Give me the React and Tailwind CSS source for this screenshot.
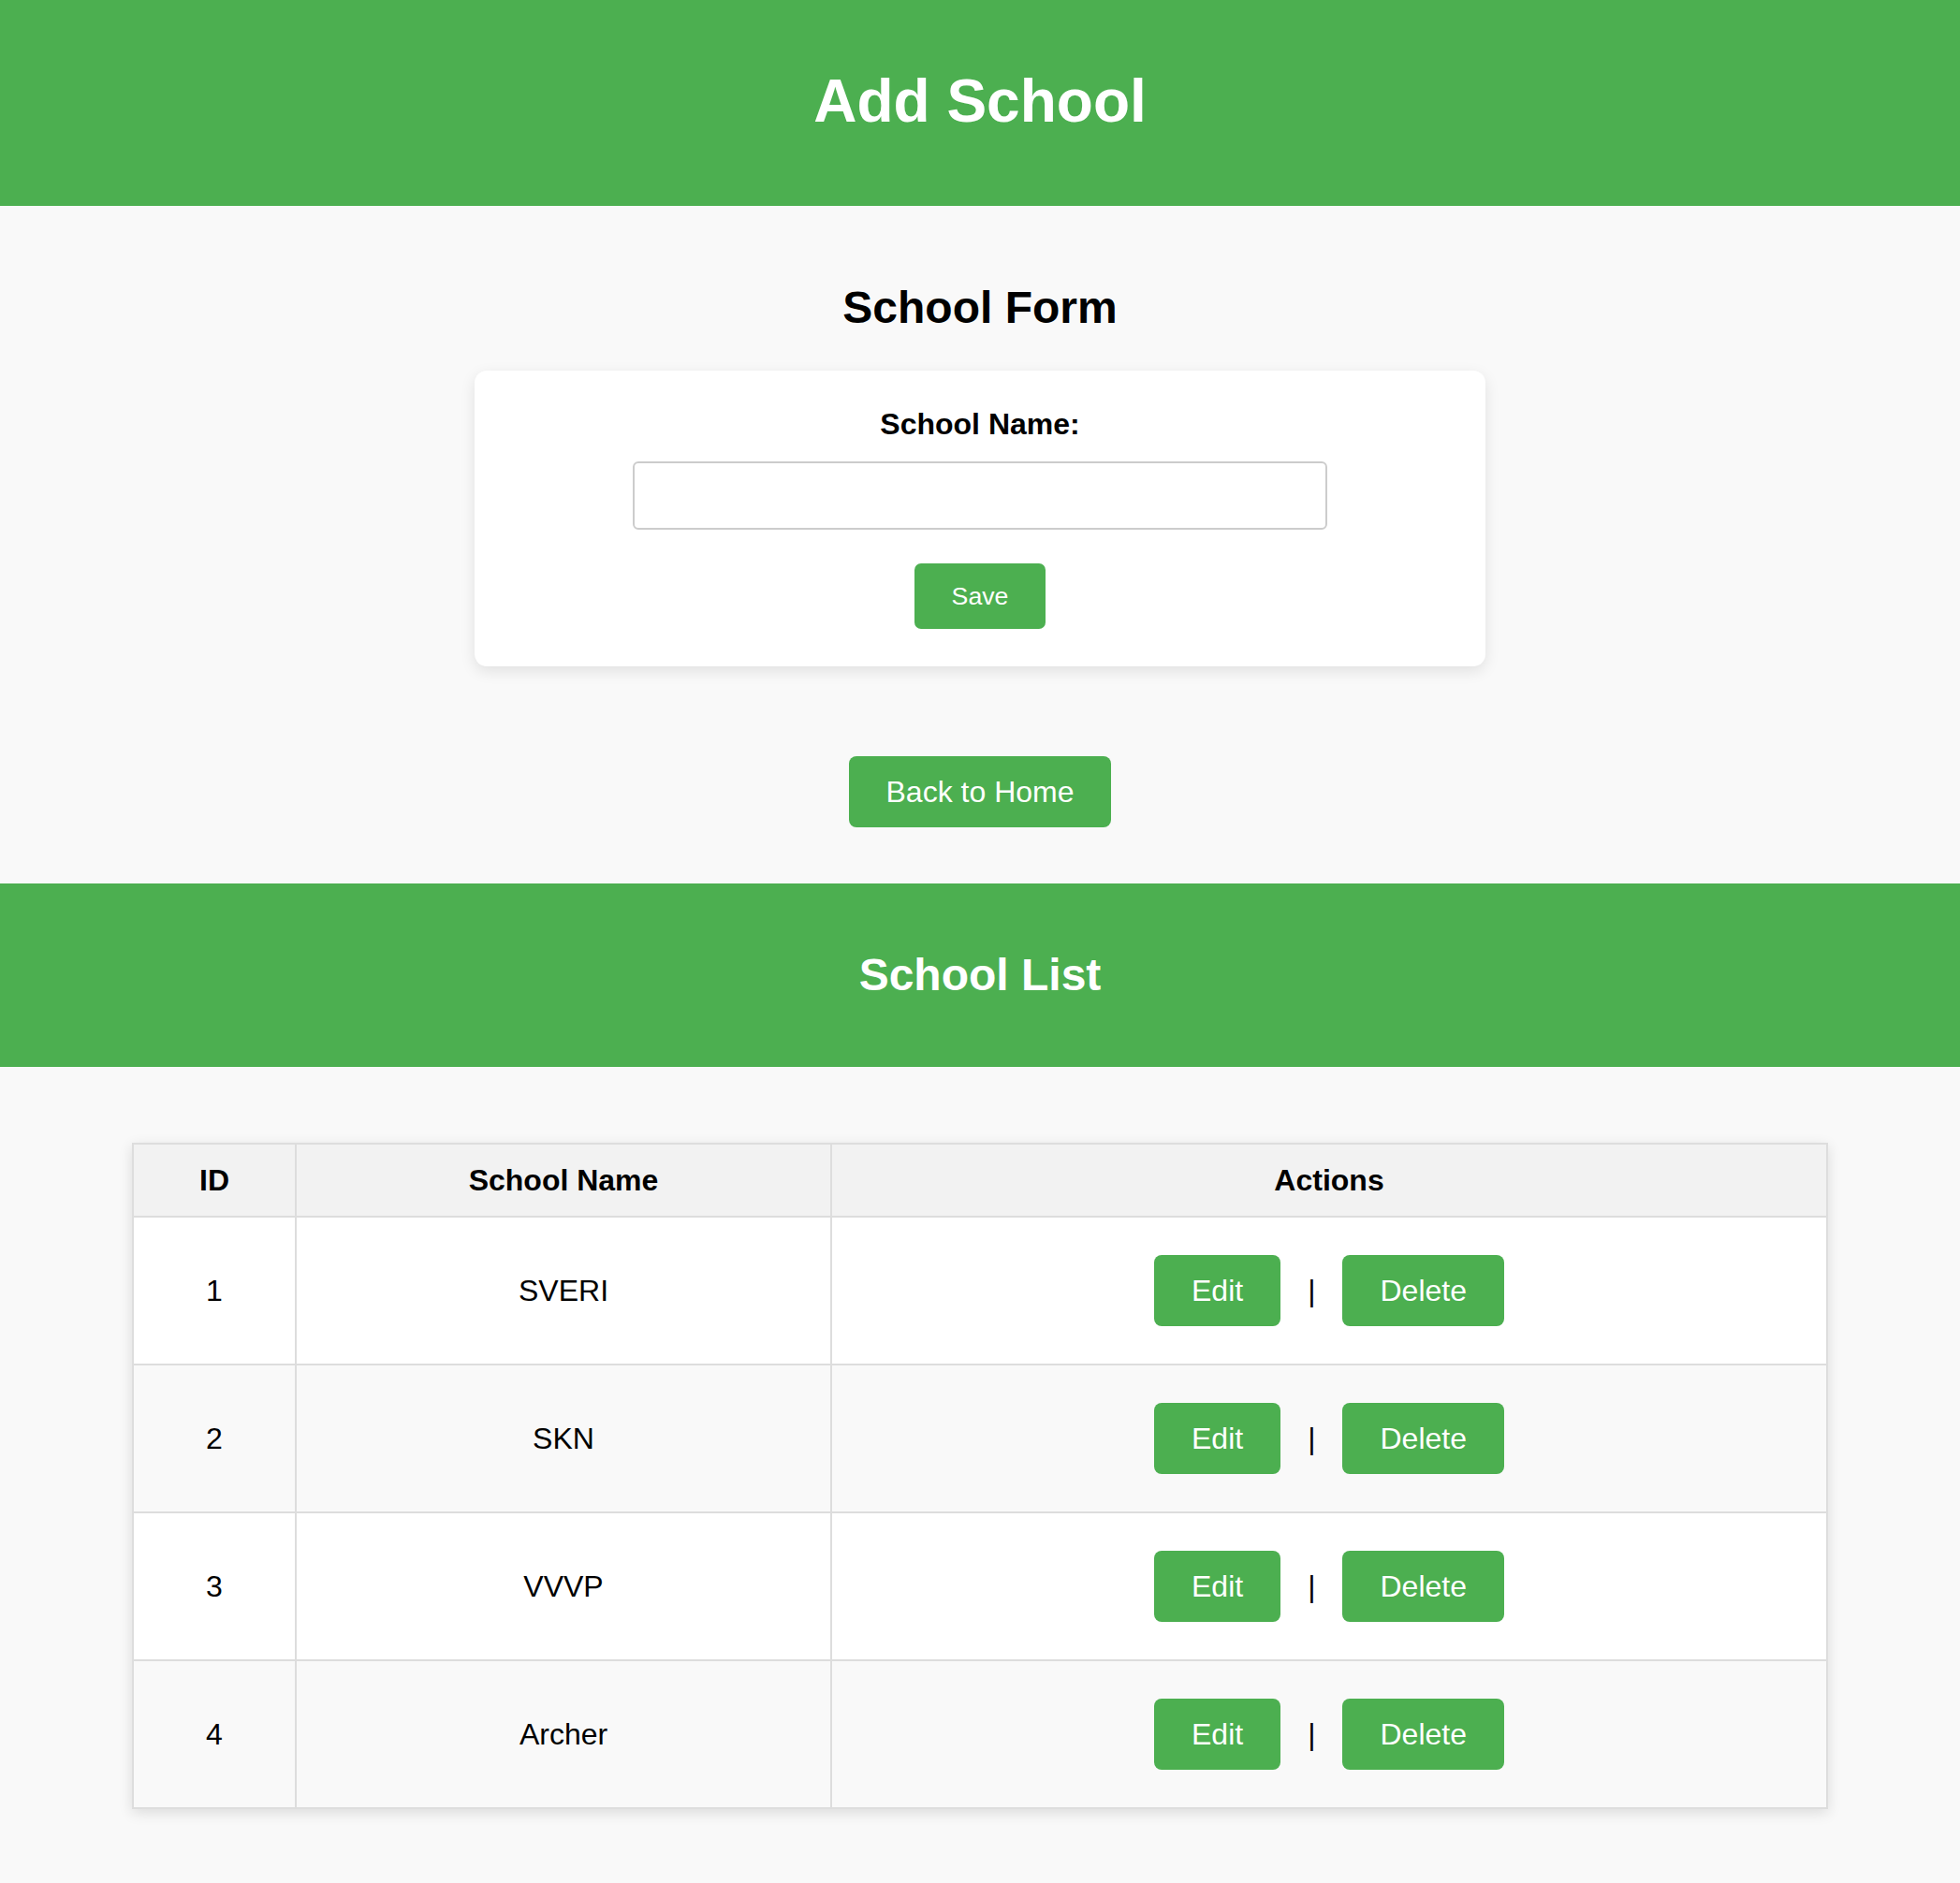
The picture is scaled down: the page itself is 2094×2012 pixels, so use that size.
import React, { useState } from "react";

const schools = [
  { id: 1, name: "SVERI" },
  { id: 2, name: "SKN" },
  { id: 3, name: "VVVP" },
  { id: 4, name: "Archer" },
];

const App = () => {
  const [schoolName, setSchoolName] = useState("");

  const handleSubmit = (e) => {
    e.preventDefault();
  };

  return (
    <div className="min-h-screen bg-[#f9f9f9] pb-[82px] font-['Liberation_Sans',Arial,sans-serif] text-black">
      {/* Page header */}
      <header className="bg-[#4caf50] pt-[71px] pb-[75px] text-center">
        <h1 className="text-[64px] leading-[74px] font-bold text-white">Add School</h1>
      </header>

      {/* Form section */}
      <h2 className="mt-[81px] text-center text-[48px] leading-[55px] font-bold">School Form</h2>

      <form
        onSubmit={handleSubmit}
        className="mx-auto mt-[40px] flex w-[1080px] flex-col items-center rounded-[13px] bg-white pt-[39px] pb-[40px] shadow-[0_5px_16px_rgba(0,0,0,0.1)]"
      >
        <label htmlFor="schoolName" className="text-[32px] leading-[37px] font-bold">
          School Name:
        </label>
        <input
          id="schoolName"
          type="text"
          value={schoolName}
          onChange={(e) => setSchoolName(e.target.value)}
          className="mt-[21px] h-[73px] w-[742px] rounded-[6px] border-2 border-[#cccccc] bg-white px-[13px] text-[26px] outline-none"
        />
        <button
          type="submit"
          className="mt-[36px] rounded-[7px] bg-[#4caf50] px-[40px] py-[20px] text-[26.67px] leading-[30px] text-white"
        >
          Save
        </button>
      </form>

      <div className="mt-[96px] flex justify-center">
        <button className="rounded-[8px] bg-[#4caf50] px-[40px] py-[20px] text-[32px] leading-[36px] text-white">
          Back to Home
        </button>
      </div>

      {/* List section */}
      <div className="mt-[60px] bg-[#4caf50] pt-[70px] pb-[71px] text-center">
        <h2 className="text-[48px] leading-[55px] font-bold text-white">School List</h2>
      </div>

      <table className="mx-auto mt-[81px] w-[1812px] border-collapse border-2 border-[#dddddd] text-center text-[32px] shadow-[0_4px_14px_rgba(0,0,0,0.12)]">
        <thead>
          <tr className="bg-[#f2f2f2]">
            <th className="w-[174px] border-2 border-[#dddddd] py-[20px] leading-[36px] font-bold">ID</th>
            <th className="w-[572px] border-2 border-[#dddddd] py-[20px] leading-[36px] font-bold">School Name</th>
            <th className="border-2 border-[#dddddd] py-[20px] leading-[36px] font-bold">Actions</th>
          </tr>
        </thead>
        <tbody>
          {schools.map((school, i) => (
            <tr key={school.id} className={i % 2 === 1 ? "bg-[#f9f9f9]" : "bg-white"}>
              <td className="border-2 border-[#dddddd] py-[40px] leading-[36px]">{school.id}</td>
              <td className="border-2 border-[#dddddd] py-[40px] leading-[36px]">{school.name}</td>
              <td className="border-2 border-[#dddddd] py-[40px]">
                <div className="flex items-center justify-center gap-[29px]">
                  <button className="rounded-[8px] bg-[#4caf50] px-[40px] py-[20px] text-[32px] leading-[36px] text-white">
                    Edit
                  </button>
                  <span className="text-[32px] leading-[36px]">|</span>
                  <button className="rounded-[8px] bg-[#4caf50] px-[40px] py-[20px] text-[32px] leading-[36px] text-white">
                    Delete
                  </button>
                </div>
              </td>
            </tr>
          ))}
        </tbody>
      </table>
    </div>
  );
};

export default App;
